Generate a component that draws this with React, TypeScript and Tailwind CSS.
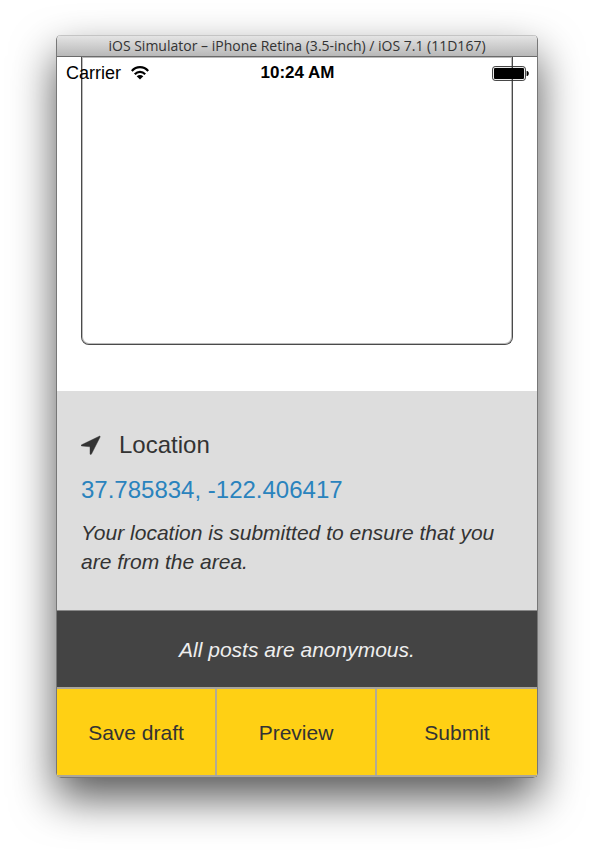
import React from "react";

function WifiIcon() {
  return (
    <svg viewBox="0 0 18 14" className="h-[14px] w-[18px]" fill="none" aria-hidden="true">
      <path d="M.8 5C5.400-.1 12.600-.1 17.200 5" stroke="#000" strokeWidth="2.2" />
      <path d="M3.800 8.200C6.800 5 11.200 5 14.200 8.200" stroke="#000" strokeWidth="2.2" />
      <path d="M5.700 10.300c2-1.900 4.600-1.900 6.600 0L9 13.600z" fill="#000" />
    </svg>
  );
}

function BatteryIcon() {
  return (
    <svg viewBox="0 0 37 15" className="h-[15px] w-[37px]" aria-hidden="true">
      <rect x=".6" y=".6" width="32.800" height="13.800" rx="2.500" fill="none" stroke="#333" />
      <rect x="2" y="2" width="30" height="11" rx="1" fill="#000" />
      <path d="M34.600 5h.8c1.800.8 1.800 4.200 0 5h-.8z" fill="#000" />
    </svg>
  );
}

function ArrowIcon() {
  return (
    <svg viewBox="0 0 20 20" className="h-5 w-5" aria-hidden="true">
      <path
        d="M18.300 1.200c.6-.3 1.200.3.8.9L10.500 19c-.4.8-1.500.6-1.500-.2V11.800L.8 11c-.8-.1-.9-.9-.2-1.200z"
        fill="#333"
        stroke="#333"
        strokeWidth=".4"
      />
    </svg>
  );
}

function StatusBar() {
  return (
    <div className="absolute inset-x-0 top-0 grid h-8 grid-cols-3 items-center pr-2 pl-[9px] text-black">
      <div className="flex items-center gap-[10px] text-[18px] leading-8">
        <span>Carrier</span>
        <WifiIcon />
      </div>
      <span className="text-center text-[17px] leading-8 font-bold">10:24 AM</span>
      <div className="flex justify-end">
        <BatteryIcon />
      </div>
    </div>
  );
}

const actions = ["Save draft", "Preview", "Submit"];

export default function App() {
  return (
    <div className="bg-white px-14 pt-[35px] pb-[78px] font-['Liberation_Sans',Arial,sans-serif] text-[#333]">
      <div className="overflow-hidden rounded-[5px] border border-t-0 border-[#777] shadow-[0_20px_44px_rgba(0,0,0,0.66)]">
        <header className="h-[22px] border-t border-b border-t-[#c4c4c4] border-b-[#6a6a6a] bg-linear-to-b from-[#e4e4e4] to-[#b8b8b8] text-center font-['Open_Sans','Noto_Sans',sans-serif] text-[14px] leading-5 whitespace-nowrap text-[#333]">
          iOS Simulator – iPhone Retina (3.5-inch) / iOS 7.1 (11D167)
        </header>
        <main>
          <section className="relative bg-white px-6 pb-[46px]">
            <textarea
              aria-label="Post"
              className="block h-72 w-full resize-none rounded-b-lg border border-t-0 border-[#4a4a4a] bg-transparent p-3 text-[21px] shadow-[inset_0_0_0_1px_#bbb] outline-none"
            />
            <StatusBar />
          </section>
          <section className="bg-[#ddd] px-6 pt-9 pb-[34px]">
            <h2 className="flex items-center gap-[18px] text-[24px] leading-9">
              <ArrowIcon />
              Location
            </h2>
            <a href="#location" className="mt-[9px] block text-[24px] leading-9 text-[#2a83bd]">
              37.785834, -122.406417
            </a>
            <p className="mt-[10px] text-[21px] leading-[29px] italic">
              Your location is submitted to ensure that you are from the area.
            </p>
          </section>
          <p className="border-t border-[#888] bg-[#444] py-[23px] pt-6 text-center text-[21px] leading-[29px] text-[#eee] italic">
            All posts are anonymous.
          </p>
          <div className="grid grid-cols-3 divide-x-2 divide-[#b3aa96] border-y-2 border-[#aaa69c] bg-[#ffd014]">
            {actions.map((label) => (
              <button key={label} type="button" className="h-[86px] pt-[2px] text-[21px] leading-7">
                {label}
              </button>
            ))}
          </div>
        </main>
      </div>
    </div>
  );
}
